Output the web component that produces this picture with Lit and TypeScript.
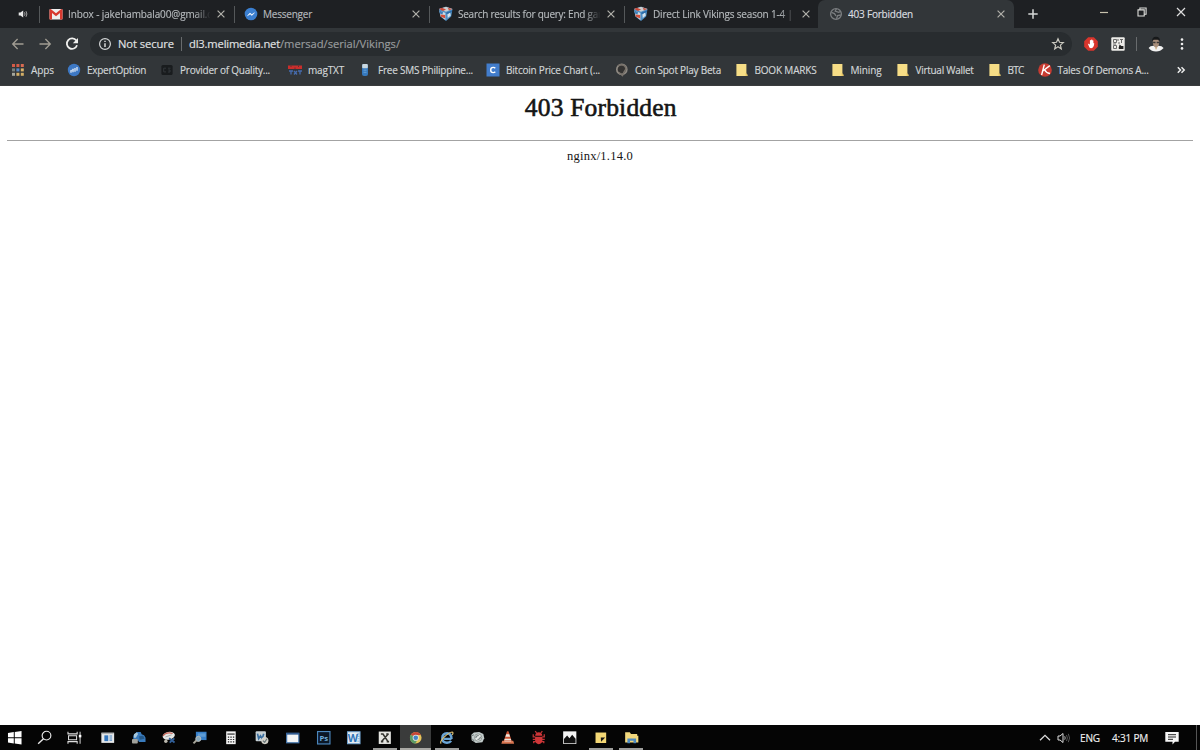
import { LitElement, html, css, svg } from "lit";
import { customElement, property } from "lit/decorators.js";
import { classMap } from "lit/directives/class-map.js";

const ruler = document.createElement("canvas").getContext("2d")!;

/** A run of text whose tracking is adjusted so that it spans `span` pixels. */
@customElement("fit-text")
class FitText extends LitElement {
  static styles = css`
    :host { display: block; white-space: pre; overflow: visible; }
  `;
  @property() text = "";
  @property({ type: Number }) span = 0;
  firstUpdated() {
    const s = getComputedStyle(this);
    ruler.font = `${s.fontWeight} ${s.fontSize} ${s.fontFamily}`;
    const natural = ruler.measureText(this.text).width;
    this.style.letterSpacing = `${(this.span - natural) / this.text.length}px`;
  }
  render() {
    return html`${this.text}`;
  }
}

const shield = svg`
  <path d="M1 3L8 .7L14.5 3L13.2 10.5L8 15L2.4 10.5Z" fill="#4f8fc4"/>
  <path d="M1 3L8 .7L14.5 3L8 5.8Z" fill="#c9cfd2"/>
  <path d="M1 3L4 1.8L8 3.4L5 5Z" fill="#c8493a"/><path d="M9.5 1.6L12.5 2.4L14.3 3L11 4.4Z" fill="#c65b4c"/>
  <path d="M1.4 4.6L7.4 7V14L2.6 10.3Z" fill="#c9dbe6"/><path d="M1.4 4.6L5 6L4.5 8.5L1.9 7.6Z" fill="#3f80b9"/>
  <path d="M2.3 8.6L7.2 9V12.6L3 10.8Z" fill="#d2513c"/><path d="M9.4 8.6L12 6.2L12.8 9.6L9.8 12Z" fill="#d3e2ec"/>
  <path d="M8.4 6.6L14 4.5L13.8 6L8.4 8.3Z" fill="#2b6ba9"/>`;
const folder = svg`<path d="M2.4 2H12.4V12.5H13.4V14H2.4Z" fill="#f6dd86"/><path d="M11.6 11V14H13.4V12.5H12.4V11Z" fill="#e8c55f"/>`;

const icons: Record<string, unknown> = {
  gmail: svg`<rect x="1.5" y="3" width="13" height="10.5" rx="1" fill="#eee"/><path d="M1.5 4V13.5H4V7L8 10.3L12 7V13.5H14.5V4Q14.4 3 13.3 3L8 7.3L2.7 3Q1.6 3 1.5 4Z" fill="#d8392f"/>`,
  messenger: svg`<circle cx="8" cy="8" r="6.3" fill="#3b7fd0"/><path d="M4.5 9.7L7 7L8.8 8.6L11.5 6.7L9 9.4L7.1 8.1Z" fill="#fff" stroke="#fff" stroke-width=".5"/>`,
  shield,
  globe: svg`<circle cx="8" cy="8" r="5.4" fill="none" stroke="#7b7e80" stroke-width="1.3"/><path d="M3.4 6.3L6.5 7.6L8 10M8.4 2.8L7.2 5.2L10.7 6.3L12.8 5.4M8.5 12.8L9.6 9.6L12.8 9" fill="none" stroke="#7b7e80" stroke-width="1.3"/>`,
  apps: svg`${[0, 1, 2].map((r) => [0, 1, 2].map((c) => svg`<rect x=${2 + c * 4.4} y=${2 + r * 4.4} width="3" height="3" fill=${[["#d35b47", "#d35b47", "#d96b52"], ["#77807d", "#5488c7", "#d8b26a"], ["#a5a79d", "#d3ae66", "#d3ae66"]][r][c]}/>`))}`,
  expert: svg`<circle cx="8" cy="8" r="6.2" fill="#3d78c4"/><path d="M5 10.8V8.2M7 10.3V6.8M9 9.8V6M11 8.8V5" stroke="#fff" stroke-width="1.1"/><path d="M4.6 8.7L7.6 7.7" stroke="#dbe8f5" stroke-width=".7"/>`,
  provider: svg`<rect x="2.4" y="3" width="11.2" height="10" rx="1.5" fill="#191c1e"/><path d="M7 6.2H4.7V9.9H7M9 6.2H11.5M9.2 8H11V10H9" fill="none" stroke="#33373a"/>`,
  mag: svg`<path d="M1 3.5H15V7H1Z" fill="#c92e2c"/><path d="M4 3.5V5M8 5.5V7M11.5 3.5V5" stroke="#6b2b2d"/><path d="M2 9H6M4 9V12.5M7 9L10 12.5M10 9L7 12.5M11 9H15M13 9V12.5" stroke="#466cae" stroke-width="1.3"/>`,
  sms: svg`<rect x="5" y="2" width="6" height="12" rx="2" fill="#3679bd"/><rect x="5.2" y="2" width="5.6" height="4.2" rx="1" fill="#c9d7df"/><path d="M6.5 8.2H9.5M6.5 10.3H9.5" stroke="#68a2d7"/>`,
  bitcoin: svg`<rect x="1.5" y="1.5" width="13" height="13" fill="#427dcc"/><path d="M10.3 6.2Q9.5 5.4 8.2 5.4Q5.7 5.4 5.7 8Q5.7 10.6 8.2 10.6Q9.5 10.6 10.3 9.8" stroke="#fff" stroke-width="1.4" fill="none"/>`,
  coin: svg`<circle cx="7.8" cy="7.4" r="5" fill="#343332" stroke="#8f8a83" stroke-width="1.7"/><path d="M4 4Q7 1.6 11 4L12 7L10 10L8.5 13.6L5 10.5" fill="none" stroke="#77716a" stroke-width="1.5"/>`,
  folder,
  tales: svg`<circle cx="8" cy="8" r="6.8" fill="#c83b31"/><path d="M7.3 2.6L4.6 13M12.8 3.6L5.8 9M7.6 7.8Q9 11 13 11.5" stroke="#fff" stroke-width="1.4" fill="none"/>`,
  back: svg`<path d="M13.5 8H3M7.6 3L2.7 8L7.6 13" fill="none" stroke="#a19d93" stroke-width="1.3"/>`,
  forward: svg`<path d="M2.5 8H13M8.4 3L13.3 8L8.4 13" fill="none" stroke="#a19d93" stroke-width="1.3"/>`,
  reload: svg`<path d="M12.3 4.6A5.2 5.2 0 1 0 13 9.3" fill="none" stroke="#f0f0ee" stroke-width="1.8"/><path d="M14 2V7.2H8.8Z" fill="#f0f0ee"/>`,
  info: svg`<circle cx="8" cy="8" r="5.4" fill="none" stroke="#d5d7d8" stroke-width="1.2"/><path d="M8 7.2V11M8 4.8V6.1" stroke="#e3e4e4" stroke-width="1.4"/>`,
  star: svg`<path d="M8 2.7L9.5 6.3L13.3 6.6L10.4 9.1L11.3 12.9L8 10.8L4.7 12.9L5.6 9.1L2.7 6.6L6.5 6.3Z" fill="none" stroke="#cbc9c0" stroke-width="1.2"/>`,
  adblock: svg`<path d="M5.2 1.2H10.8L14.8 5.2V10.8L10.8 14.8H5.2L1.2 10.8V5.2Z" fill="#d8352c"/><path d="M4.8 7.4L6.4 11.6Q8 13 9.8 11.6Q11 10.2 11.3 7.4L10.4 7V4.5Q9.7 4 9.3 4.5V3.8Q8.7 3 8.2 3.8V4.3Q7.4 3.8 6.9 4.5V8.4Z" fill="#fff"/>`,
  qr: svg`<rect x="1.3" y="1.3" width="13.4" height="13.4" rx="1" fill="#ecebe8"/><path d="M3.5 3.5H6.5V6.5H3.5ZM3.5 9.5H6.5V12.5H3.5Z" fill="none" stroke="#6b6b6b"/><path d="M8 3V5M10 3.5H13M11.5 4V7M8 7H10M3 8H6" stroke="#666"/><path d="M8.6 12L9.6 8.6L11.4 10H13.4V13H9Z" fill="#222"/>`,
  avatar: svg`<path d="M.6 12Q2 9.8 5.6 9.8H10.4Q14 9.8 15.6 12Q12.5 15.6 8 15.6Q3.5 15.6 .6 12Z" fill="#f2f2f2"/><path d="M4.8 5.5Q4.8 10.7 8.1 12Q11.2 10.7 11.2 5.5Q10 2.5 8 2.5Q5.5 2.5 4.8 5.5Z" fill="#a98f7b"/><path d="M4.3 5.3Q3.7 1 8 .8Q12.4 1 11.8 5.3L11 3.8H5.2Z" fill="#17191a"/><path d="M5 5.7H7.5V7.2H5.2ZM8.7 5.7H11.2L11 7.2H8.7Z" fill="#3a3634"/><path d="M7 11.5L8 14L9.2 11.5Z" fill="#d1ad7d"/>`,
  menu: svg`<circle cx="8" cy="3.6" r="1.3" fill="#eee"/><circle cx="8" cy="8" r="1.3" fill="#eee"/><circle cx="8" cy="12.4" r="1.3" fill="#eee"/>`,
  close: svg`<path d="M4.6 4.6L11.4 11.4M11.4 4.6L4.6 11.4" stroke="#b1b0aa" stroke-width="1.2"/>`,
  plus: svg`<path d="M8 3.3V12.7M3.3 8H12.7" stroke="#d6d7d7" stroke-width="1.5"/>`,
  minimise: svg`<path d="M4 8.5H12" stroke="#c8c3ae" stroke-width="1.2"/>`,
  restore: svg`<path d="M4 5.9H10.2V12H4ZM5.9 5.7V4H12.1V10.2H10.4" fill="none" stroke="#dededb" stroke-width="1.1"/>`,
  quit: svg`<path d="M4 4L12 12M12 4L4 12" stroke="#dedede" stroke-width="1.2"/>`,
  sound: svg`<path d="M3.7 6.6H5.4L8.2 4.5V11.5L5.4 9.4H3.7Z" fill="#e8e8e8"/><path d="M9.5 6.3Q10.6 8 9.5 9.7M11 5.2Q12.8 8 11 10.8" fill="none" stroke="#a3a3a3"/>`,
  more: svg`<path d="M4.8 5.3L7.5 8L4.8 10.7M8.5 5.3L11.2 8L8.5 10.7" fill="none" stroke="#ededed" stroke-width="1.5"/>`,
  windows: svg`<path d="M1 3L7 2.1V7.5H1ZM8 2L15 1V7.5H8ZM1 8.5H7V13.9L1 13ZM8 8.5H15V15L8 14Z" fill="#fff"/>`,
  search: svg`<circle cx="9.8" cy="5.8" r="4.5" fill="none" stroke="#e9e9e9" stroke-width="1.2"/><path d="M6.7 9L1.2 14.3" stroke="#e9e9e9" stroke-width="1.4"/>`,
  taskview: svg`<path d="M1 1.8V4H10.5V1.8M1 14.2V12H10.5V14.2M1.6 6H9.9V10H1.6Z" fill="none" stroke="#dedede" stroke-width="1.1"/><path d="M13.5 1.8V14.2" stroke="#dedede"/><rect x="12.2" y="5" width="2.6" height="2.6" fill="#fff"/>`,
  news: svg`<rect x="1.4" y="2.7" width="13.2" height="10.6" fill="#e6e8e9"/><path d="M2 3.7H14" stroke="#a8acae"/><rect x="4.5" y="5.5" width="4" height="6" fill="#3476bd"/><path d="M9.8 6.2H12.5M9.8 8.3H12.5M9.8 10.4H12.5" stroke="#4d86c0" stroke-width="1.2"/>`,
  transfer: svg`<path d="M2.5 9.5Q1.5 5 4 4L6 2H10L11 4.3L13.5 5.4L15 8V12.5H8V11H3Z" fill="#397bbd"/><path d="M3 4.5L6 2.3L7.3 4L5 8L3 8Z" fill="#a8c8dc"/><path d="M8.3 6.5L12.7 6L14 9L9 10Z" fill="#255989"/><rect x="1" y="9.3" width="6" height="4.6" rx="1" fill="#a1a19b"/>`,
  snip: svg`<ellipse cx="8" cy="6" rx="6.4" ry="4" transform="rotate(-12 8 6)" fill="#e4e7e6"/><path d="M2.3 6.3Q4 2.7 9 3L12 3.6" fill="none" stroke="#c85f50" stroke-width="1.2"/><path d="M4.5 7.2L11 5" stroke="#aaa"/><path d="M8.3 8.6L14 13M13.8 8.6L9 13" stroke="#315f98" stroke-width="1.9"/><circle cx="5" cy="11.5" r="1.8" fill="#bcb9af"/>`,
  magnify: svg`<rect x="4" y="1.8" width="11" height="8.6" fill="#377fc9"/><path d="M6 3.5H14V7H6Z" fill="#5e9cd6"/><circle cx="6.5" cy="9.2" r="2.6" fill="#88a9bd" stroke="#bcbdb9"/><path d="M4.5 10.8L1.5 13.8" stroke="#a8a69b" stroke-width="2"/>`,
  calc: svg`<rect x="3.3" y="1.4" width="9.8" height="13.2" fill="#f4f4f4"/><path d="M4.5 4.2H12" stroke="#252525" stroke-width="1.2"/><path d="M5 7.3H11.7M5 9.8H11.7M5 12.3H11.7" stroke="#252525" stroke-width="1.2" stroke-dasharray="1.4 1.2"/>`,
  viewer: svg`<rect x="1.7" y="1.4" width="10.6" height="10.2" rx="1" fill="#c7d0d3"/><path d="M3.6 3.8L4.8 9L6.7 6L8.5 9L10 3.8" fill="none" stroke="#386d9f" stroke-width="1.7"/><circle cx="11.2" cy="10.9" r="3.7" fill="#d2d0c8"/><path d="M9.2 11L11 12.7L13.4 9" fill="none" stroke="#6a7678" stroke-width="1.3"/>`,
  display: svg`<rect x="1.7" y="3.4" width="12.6" height="9.8" fill="#f3f5f6" stroke="#4375ad" stroke-width="1.2"/><path d="M1.5 3.9H14.5" stroke="#315b91" stroke-width="1.8"/>`,
  photoshop: svg`<rect x="1.6" y="1.6" width="12.8" height="12.8" fill="#0b1726" stroke="#4b87bd" stroke-width="1.2"/><text x="8" y="11" class="glyph ps">Ps</text>`,
  word: svg`<rect x="1.5" y="1.8" width="13" height="12.4" fill="#e4edf3"/><path d="M11.6 4H14M12 6.5H14M12 9H14M11.6 11.5H14" stroke="#84acd2"/><text x="7.2" y="12" class="glyph wd">W</text><rect x="1.5" y="1.8" width="13" height="12.4" fill="none" stroke="#6fa4d3"/>`,
  exe: svg`<rect x="1.8" y="1.6" width="12.5" height="12.8" fill="#e6e6e2"/><path d="M4 4.2H6.2L11.5 12.2M11.8 3.8L4.5 12.1M9.6 4.2H12M4 12H6.5M10 12H12.5" fill="none" stroke="#34342f" stroke-width="1.6"/>`,
  chrome: svg`<circle cx="8" cy="8" r="6" fill="#e5c35a"/><path d="M8 8L2.8 5A6 6 0 0 1 13.3 5.2H8Z" fill="#c64637"/><path d="M2.8 5A6 6 0 0 0 7.6 14L9.8 10.1L8 8Z" fill="#5a9c66"/><circle cx="8" cy="8" r="3.2" fill="#e8e8e5"/><circle cx="8" cy="8" r="2.4" fill="#4584c4"/>`,
  ie: svg`<path d="M12.9 9.2H5.2M12.9 9.2Q12.9 3.5 8.4 3.4Q3.4 3.6 3.4 8.5Q3.5 13.1 8.2 13.2Q11.2 13.1 12.5 11.2" fill="none" stroke="#6ba5d6" stroke-width="2.5"/><path d="M2.3 14Q.2 12.8 5 7.7Q10.5 2.2 13.6 2.1Q15.3 2.4 13.6 5" fill="none" stroke="#e0c273" stroke-width="1.2"/>`,
  camera: svg`<path d="M1.4 5L4 2.7L9.5 2L13.8 4L14.7 8.5L12.8 12.7L6 13.3L1.7 10.6Z" fill="#c3cccb"/><circle cx="8.4" cy="7.8" r="3.8" fill="#e5e8e6" stroke="#8f9895"/><path d="M6 8.2Q6 5.6 9 5.6M7.8 9.8Q10.5 9.8 10.8 7" fill="none" stroke="#6f7b7b" stroke-width="1.1"/><path d="M2 5.8L4 5M2.3 9L4.5 11.6" stroke="#65716f"/>`,
  vlc: svg`<path d="M7.2 1.3H8.8L12.2 11.5H3.8Z" fill="#cf5637"/><path d="M6.4 4.5H9.6L10.4 7H5.6ZM4.9 9H11.1L11.6 10.5H4.4Z" fill="#ece9df"/><path d="M2.3 11.1H13.7L14.6 14.2H1.4Z" fill="#d97651"/><path d="M4.5 11.5H11.5" stroke="#eee" stroke-width=".7"/>`,
  bug: svg`<path d="M4.3 1.2L5.8 3M11.7 1.2L10.2 3M2.3 4.4V7H4.4M13.7 4.4V7H11.6M1.8 9.6H14.2M2.8 13.6V12H5M13.2 13.6V12H11" fill="none" stroke="#c33436" stroke-width="1.3"/><path d="M4.3 5.9Q4.5 2.2 8 2.2Q11.5 2.2 11.7 5.9ZM4.2 6.9H11.8V10.5Q11.4 14.3 8 14.6Q4.6 14.3 4.2 10.5Z" fill="#cf3638"/>`,
  photos: svg`<rect x="1.2" y="1.4" width="13.6" height="13" fill="#f4f4f4"/><path d="M2 13.6V9.4L5.3 5.8L7.7 8.4L10.5 4.8L14 9V13.6Z" fill="#101010"/>`,
  note: svg`<path d="M2.6 2.6H13.6V13.4H2.6Z" fill="#f3d775"/><path d="M8 7.7H12.6L8.3 12Z" fill="#151515"/>`,
  explorer: svg`<path d="M1.2 2.4H6L7.2 4H13.6V6H14.8V13H1.2Z" fill="#f1d77d"/><path d="M3.5 13.8V8.8H12.5V13.8H9.8V11.1H6.2V13.8Z" fill="#4e8ac0"/>`,
  chevron: svg`<path d="M3 10.3L8 5.3L13 10.3" fill="none" stroke="#dcdcdc" stroke-width="1.3"/>`,
  volume: svg`<path d="M2 6H4L7 3.5V12.5L4 10H2Z" fill="none" stroke="#ddd"/><path d="M8.7 6.3Q9.7 8 8.7 9.7" fill="none" stroke="#bbb"/><path d="M10.5 5Q12.3 8 10.5 11M12.3 3.8Q14.8 8 12.3 12.2" fill="none" stroke="#555"/>`,
  action: svg`<path d="M1.3 2H14.7V11.8H11L8.5 14.5V11.8H1.3Z" fill="#f6f6f6"/><path d="M4 4.7H12M4 7H12M4 9.3H9" stroke="#222"/>`,
};

@customElement("ui-icon")
class UiIcon extends LitElement {
  static styles = css`
    :host { display: block; flex: none; width: 16px; height: 16px; }
    svg { display: block; width: 100%; height: 100%; }
    .glyph { font-family: "Open Sans", sans-serif; font-weight: 700; text-anchor: middle; -webkit-text-stroke: 0; }
    .ps { font-size: 8px; fill: #70addb; }
    .wd { font-size: 11px; fill: #2f74b8; }
  `;
  @property() name = "";
  render() {
    return html`<svg viewBox="0 0 16 16">${icons[this.name]}</svg>`;
  }
}

const tabs = [
  { icon: "gmail", title: "Inbox - jakehambala00@gmail.c", span: 144, fade: true },
  { icon: "messenger", title: "Messenger", span: 49 },
  { icon: "shield", title: "Search results for query: End gam", span: 149, fade: true },
  { icon: "shield", title: "Direct Link Vikings season 1-4 | V", span: 148, fade: true },
  { icon: "globe", title: "403 Forbidden", span: 65, active: true },
];

const bookmarks = [
  { icon: "apps", label: "Apps", span: 23, slot: 56 },
  { icon: "expert", label: "ExpertOption", span: 59, slot: 93 },
  { icon: "provider", label: "Provider of Quality...", span: 90, slot: 128 },
  { icon: "mag", label: "magTXT", span: 36, slot: 70 },
  { icon: "sms", label: "Free SMS Philippine...", span: 95, slot: 128 },
  { icon: "bitcoin", label: "Bitcoin Price Chart (...", span: 94, slot: 129 },
  { icon: "coin", label: "Coin Spot Play Beta", span: 86, slot: 119.5 },
  { icon: "folder", label: "BOOK MARKS", span: 62, slot: 96 },
  { icon: "folder", label: "Mining", span: 31, slot: 65 },
  { icon: "folder", label: "Virtual Wallet", span: 58, slot: 92 },
  { icon: "folder", label: "BTC", span: 16, slot: 50 },
  { icon: "tales", label: "Tales Of Demons A...", span: 91, slot: 136 },
];

const pinned = ["news", "transfer", "snip", "magnify", "calc", "viewer", "display", "photoshop", "word", "exe", "chrome", "ie", "camera", "vlc", "bug", "photos", "note", "explorer"];
const running = new Set(["exe", "chrome", "ie", "note", "explorer"]);

@customElement("app-root")
class AppRoot extends LitElement {
  static styles = css`
    :host {
      display: flex; flex-direction: column; width: 1200px; height: 750px; overflow: hidden;
      background: #fff; color: #d3d6d8;
      font: 10px/16px "Open Sans", "Noto Sans", sans-serif;
      -webkit-text-stroke: .15px;
    }
    * { box-sizing: border-box; }
    .tabs { display: flex; height: 28px; background: #1e2023; flex: none; }
    .audio { width: 39px; padding: 6px 0 0 15px; }
    .tab { width: 195px; height: 28px; display: flex; align-items: center; padding-left: 8px; border-left: 1px solid transparent; }
    .tab.ruled { border-image: linear-gradient(transparent 22%, #55585a 22%, #55585a 80%, transparent 80%) 1; }
    .tab ui-icon { margin-right: 4px; }
    .tab .title { width: 144px; overflow: hidden; color: #b5b9bc; }
    .tab .fade { mask-image: linear-gradient(90deg, #000 88%, transparent 99%); }
    .tab .x { margin: 0 0 0 1px; }
    .tab.active { background: #323639; border-radius: 7px 7px 0 0; border-left: 0; padding-left: 10px; margin-left: -1px; width: 196px; }
    .tab.active .title { color: #dcdfe0; }
    .new { padding: 6px 0 0 11px; }
    .controls { display: flex; gap: 22.5px; margin: 4px 11.5px 0 auto; }
    .toolbar { height: 58px; flex: none; background: #323639; border-bottom: 1px solid #3b3d3e; }
    .address { display: flex; align-items: center; height: 31px; padding-left: 10px; }
    .nav { display: flex; gap: 11px; width: 80px; }
    .omnibox { width: 982px; height: 24px; border-radius: 12px; background: #282c2f; display: flex; align-items: center; padding: 0 6px 0 7px; font-size: 11.2px; color: #e0e2e3; }
    .omnibox .state { margin-left: 5px; width: 63px; }
    .rule { width: 1px; height: 14px; background: #686b6d; margin-right: 7px; }
    .host { width: 91px; }
    .path { color: #999c9e; }
    .star { margin-left: auto; }
    .extensions { display: flex; align-items: center; padding-left: 11px; }
    .extensions .qr { margin: 0 10px 0 11px; }
    .extensions .rule { margin: 0 11px 0 0; }
    .extensions .menu { margin-left: 10px; }
    .bookmarks { display: flex; align-items: center; height: 22px; padding-left: 10px; }
    .bookmark { display: flex; align-items: center; flex: none; }
    .bookmark fit-text { margin-left: 5px; }
    .page { flex: 1; padding: 8px 7px; text-align: center; color: #151515; font-family: "Liberation Serif", serif; -webkit-text-stroke: 0; }
    h1 { margin: 0; height: 46px; padding-left: 1.5px; font-size: 25.5px; line-height: 27px; font-weight: 400; display: flex; justify-content: center; -webkit-text-stroke: .6px #151515; }
    hr { margin: 0; border: 0; height: 1px; background: #a3a3a3; }
    .server { display: flex; justify-content: center; font-size: 12.5px; line-height: 18px; padding-top: 6px; }
    .taskbar { display: flex; height: 25px; flex: none; background: #050505; color: #f0f0f0; }
    .cell { width: 30.82px; height: 25px; display: flex; justify-content: center; align-items: center; }
    .cell ui-icon { width: 15.5px; height: 15.5px; }
    .cell.start { width: 30px; }
    .cell.running { background: linear-gradient(#9f9f9d, #9f9f9d) center bottom / 24px 2px no-repeat; }
    .cell.focused { background: linear-gradient(#aaa9a5, #aaa9a5) center bottom / 31px 2px no-repeat, #3a3b3b; }
    .pins { display: flex; margin-left: 2.2px; }
    .tray { display: flex; align-items: center; margin-left: auto; }
    .tray .eng { margin-left: 5px; width: 32px; }
    .tray .time { width: 52px; }
    .tray ui-icon { margin-right: 3px; }
    .tray .edge { width: 1px; height: 25px; background: #555; margin: 0 3px 0 13px; }
  `;
  render() {
    return html`
      <div class="tabs">
        <div class="audio"><ui-icon name="sound"></ui-icon></div>
        ${tabs.map((t) => html`
          <div class=${classMap({ tab: true, active: !!t.active, ruled: !t.active })}>
            <ui-icon name=${t.icon}></ui-icon>
            <div class=${classMap({ title: true, fade: !!t.fade })}><fit-text .text=${t.title} .span=${t.span}></fit-text></div>
            <ui-icon class="x" name="close"></ui-icon>
          </div>`)}
        <div class="new"><ui-icon name="plus"></ui-icon></div>
        <div class="controls">${["minimise", "restore", "quit"].map((n) => html`<ui-icon name=${n}></ui-icon>`)}</div>
      </div>
      <div class="toolbar">
        <div class="address">
          <div class="nav">${["back", "forward", "reload"].map((n) => html`<ui-icon name=${n}></ui-icon>`)}</div>
          <div class="omnibox">
            <ui-icon name="info"></ui-icon>
            <div class="state"><fit-text .text=${"Not secure"} .span=${56}></fit-text></div>
            <div class="rule"></div>
            <div class="host"><fit-text .text=${"dl3.melimedia.net"} .span=${91}></fit-text></div>
            <fit-text class="path" .text=${"/mersad/serial/Vikings/"} .span=${120}></fit-text>
            <ui-icon class="star" name="star"></ui-icon>
          </div>
          <div class="extensions">
            <ui-icon name="adblock"></ui-icon><ui-icon class="qr" name="qr"></ui-icon>
            <div class="rule"></div>
            <ui-icon name="avatar"></ui-icon><ui-icon class="menu" name="menu"></ui-icon>
          </div>
        </div>
        <div class="bookmarks">
          ${bookmarks.map((b) => html`<div class="bookmark" style="width:${b.slot}px">
            <ui-icon name=${b.icon}></ui-icon><fit-text .text=${b.label} .span=${b.span}></fit-text>
          </div>`)}
          <ui-icon name="more"></ui-icon>
        </div>
      </div>
      <div class="page">
        <h1><fit-text .text=${"403 Forbidden"} .span=${152}></fit-text></h1>
        <hr />
        <div class="server"><fit-text .text=${"nginx/1.14.0"} .span=${66}></fit-text></div>
      </div>
      <div class="taskbar">
        ${["windows", "search", "taskview"].map((n) => html`<div class="cell start"><ui-icon name=${n}></ui-icon></div>`)}
        <div class="pins">
          ${pinned.map((n) => html`<div class=${classMap({ cell: true, running: running.has(n), focused: n === "chrome" })}><ui-icon name=${n}></ui-icon></div>`)}
        </div>
        <div class="tray">
          <ui-icon name="chevron"></ui-icon><ui-icon name="volume"></ui-icon>
          <div class="eng"><fit-text .text=${"ENG"} .span=${20}></fit-text></div>
          <div class="time"><fit-text .text=${"4:31 PM"} .span=${36}></fit-text></div>
          <ui-icon name="action"></ui-icon>
          <div class="edge"></div>
        </div>
      </div>`;
  }
}
